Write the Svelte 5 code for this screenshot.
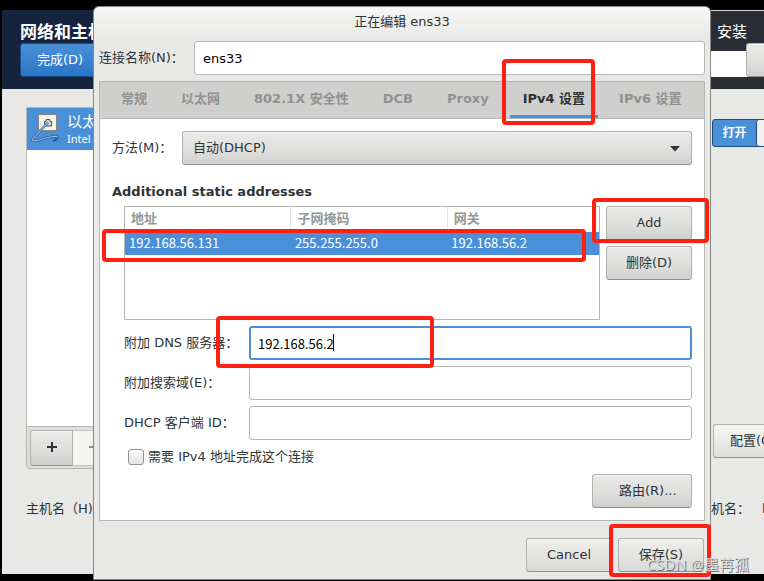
<script>
  let name = $state('ens33');
  let method = $state('auto');
  let dns = $state('192.168.56.2');
  let search = $state('');
  let clientId = $state('');
  let required = $state(false);
  let active = $state(5);

  const tabs = ['常规', '以太网', '802.1X 安全性', 'DCB', 'Proxy', 'IPv4 设置', 'IPv6 设置'];
  const columns = ['地址', '子网掩码', '网关'];
  const rows = [['192.168.56.131', '255.255.255.0', '192.168.56.2']];
</script>

<div class="desktop">
  <div class="installer">
    <header>
      <div class="head-left">
        <h1>网络和主机名</h1>
        <button class="done">完成(D)</button>
      </div>
      <div class="head-right">
        <span class="product">安装</span>
        <div class="lang"><button class="btn" aria-label="帮助"></button></div>
      </div>
    </header>
    <div class="body">
      <div class="devices">
        <div class="device">
          <svg width="28" height="30" viewBox="0 0 28 30" aria-hidden="true">
            <rect x="7.500" y="1.500" width="18" height="16" fill="#f1f1ed" stroke="#85857e" />
            <path d="M13.500 13V8.500h1.500v-2h4v2h1.500V13z" fill="#d4d4cf" stroke="#555753" />
            <path d="M17 9.500 L1.500 26 C-0.500 29 7 27.500 13 25.500 C19 23.500 27 22.500 26.500 24.500 C26 26 24 27.500 22 28" fill="none" stroke="#2b5c9e" stroke-width="2.400" />
            <path d="M17 9.500 L1.500 26 C-0.500 29 7 27.500 13 25.500 C19 23.500 27 22.500 26.500 24.500" fill="none" stroke="#8fb5e4" stroke-width="1.200" />
          </svg>
          <div class="device-text"><strong>以太网 (ens33)</strong><small>Intel Corporation</small></div>
        </div>
        <div class="list"></div>
        <div class="list-tools">
          <button class="btn" aria-label="添加">
            <svg width="10" height="10" viewBox="0 0 10 10"><path d="M5 0v10M0 5h10" stroke="#2e3436" stroke-width="2" /></svg>
          </button>
          <button class="off" aria-label="移除" disabled>
            <svg width="10" height="10" viewBox="0 0 10 10"><path d="M0 5h10" stroke="#8b8e8f" stroke-width="2" /></svg>
          </button>
        </div>
        <p class="host">主机名（H)：</p>
      </div>
      <div class="side">
        <button class="toggle" aria-pressed="true"><span>打开</span><i></i></button>
        <button class="btn configure">配置(O)...</button>
        <p class="current">机名：<span>localhost</span></p>
      </div>
    </div>
  </div>

  <div class="dialog" role="dialog" aria-labelledby="dialog-title">
    <div class="title" id="dialog-title">正在编辑 ens33</div>
    <div class="name-row">
      <label for="conn">连接名称(N)：</label>
      <input id="conn" class="entry" bind:value={name} />
    </div>

    <div class="notebook">
      <div class="tabs" role="tablist">
        {#each tabs as tab, i}
          <button role="tab" class:active={active === i} aria-selected={active === i} onclick={() => (active = i)}>
            {tab}
            {#if i === 5}<span class="mark mark-tab"></span>{/if}
          </button>
        {/each}
      </div>

      <div class="pane">
        <div class="method">
          <label for="method">方法(M)：</label>
          <div class="select">
            <select id="method" class="btn" bind:value={method}>
              <option value="auto">自动(DHCP)</option>
              <option value="manual">手动</option>
            </select>
            <svg width="10" height="6" viewBox="0 0 10 6" aria-hidden="true"><path d="M0 0h10L5 5.500z" fill="#2e3436" /></svg>
          </div>
        </div>

        <h2>Additional static addresses</h2>

        <div class="section">
          <div class="addresses">
            <div class="table-box">
              <table>
                <thead>
                  <tr>{#each columns as c}<th>{c}</th>{/each}</tr>
                </thead>
                <tbody>
                  {#each rows as row}
                    <tr>{#each row as cell}<td>{cell}</td>{/each}</tr>
                  {/each}
                </tbody>
              </table>
              <span class="mark mark-row"></span>
            </div>
            <div class="actions">
              <div class="marked">
                <button class="btn latin">Add</button>
                <span class="mark mark-add"></span>
              </div>
              <button class="btn">删除(D)</button>
            </div>
          </div>

          <div class="fields">
            <label for="dns">附加 DNS 服务器：</label>
            <div class="marked">
              <input id="dns" class="entry focused" bind:value={dns} />
              <span class="caret"></span>
              <span class="mark mark-dns"></span>
            </div>
            <label for="search">附加搜索域(E)：</label>
            <input id="search" class="entry" bind:value={search} />
            <label for="client">DHCP 客户端 ID：</label>
            <input id="client" class="entry" bind:value={clientId} />
          </div>

          <label class="check">
            <input type="checkbox" bind:checked={required} />
            <span>需要 IPv4 地址完成这个连接</span>
          </label>
          <button class="btn routes">路由(R)...</button>
        </div>
      </div>
    </div>

    <div class="footer">
      <button class="btn">Cancel</button>
      <div class="marked">
        <button class="btn">保存(S)</button>
        <span class="mark mark-save"></span>
      </div>
    </div>
  </div>

  <div class="credit">CSDN @墨苒孤</div>
</div>

<style>
  :global(body) {
    margin: 0;
    background: #000;
  }
  .desktop,
  .desktop :global(*) {
    box-sizing: border-box;
  }
  .desktop {
    position: relative;
    min-height: 100vh;
    padding: 10px 0 7px 2px;
    overflow: hidden;
    background: #000;
    color: #2e3436;
    font: 13px/20px 'DejaVu Sans', 'Noto Sans CJK SC', sans-serif;
  }
  button,
  input,
  select {
    font: inherit;
    color: inherit;
    margin: 0;
  }
  h1,
  h2,
  p {
    margin: 0;
  }
  .btn {
    height: 34px;
    padding: 0 16px;
    border: 1px solid #b0b0ac;
    border-bottom-color: #92928d;
    border-radius: 3px;
    background: linear-gradient(#e9e9e8, #dededc 60%, #cfcfcd);
    box-shadow: inset 0 1px #f5f5f4;
    white-space: nowrap;
  }
  .marked {
    position: relative;
    display: grid;
  }
  .mark {
    position: absolute;
    z-index: 2;
    border: 4px solid #ff2011;
    border-radius: 4px;
    pointer-events: none;
  }

  /* installer behind the dialog */
  .installer {
    background: #e8e8e6;
  }
  header {
    display: flex;
    height: 79px;
    color: #fff;
  }
  .head-left {
    flex: 1;
    padding: 11px 0 0 18px;
    background: #15233f;
  }
  h1 {
    font-size: 17px;
    line-height: 22px;
  }
  .done {
    width: 120px;
    height: 34px;
    padding: 0 16px;
    text-align: left;
    border: 1px solid #1c5187;
    border-radius: 3px;
    background: linear-gradient(#4a90d9, #2a76c6);
    color: #fff;
  }
  .head-right {
    flex: 0 0 53px;
    border-top: 1px solid #d8d8d8;
    background: #2a2d35;
    overflow: hidden;
  }
  .product {
    display: block;
    padding: 11px 0 0 6px;
    font-size: 15px;
  }
  .lang {
    display: flex;
    align-items: flex-end;
    justify-content: flex-end;
    height: 35px;
    background: linear-gradient(#2a2d35 9px, #fff 9px);
  }
  .lang .btn {
    width: 18px;
    padding: 0;
    border-right: 0;
    border-radius: 3px 0 0 3px;
  }
  .body {
    display: flex;
    justify-content: space-between;
    height: 485px;
  }
  .devices {
    width: 300px;
    padding: 18px 0 0 24px;
  }
  .device {
    display: flex;
    gap: 8px;
    height: 43px;
    padding: 5px 0 0 4px;
    border: 1px solid #b6b6b3;
    border-bottom: 0;
    background: #4a90d9;
    color: #fff;
  }
  .device-text {
    display: grid;
    align-content: start;
  }
  .device strong {
    font-size: 15px;
    font-weight: 400;
    line-height: 18px;
  }
  .device small {
    font: 11px/16px 'Noto Sans', sans-serif;
  }
  .list {
    height: 276px;
    border-left: 1px solid #b6b6b3;
    background: #fff;
  }
  .list-tools {
    display: flex;
    height: 43px;
    padding: 3px;
    border: 1px solid #b6b6b3;
    border-radius: 0 0 4px 4px;
    background: #dededc;
  }
  .list-tools button {
    width: 43px;
    height: 36px;
    padding: 0;
    border-radius: 3px 0 0 3px;
  }
  .list-tools .off {
    border: 1px solid #c4c4c1;
    border-left: 0;
    border-radius: 0 3px 3px 0;
    background: #f4f4f3;
  }
  .host {
    margin-top: 30px;
  }
  .side {
    flex: 0 0 53px;
    padding-top: 30px;
    overflow: hidden;
  }
  .toggle {
    display: flex;
    width: 90px;
    height: 28px;
    margin-left: 1px;
    padding: 0;
    border: 1px solid #1c4a7c;
    border-radius: 3px;
    background: #4a90d9;
    color: #fff;
    font-size: 12px;
    font-weight: 700;
    line-height: 26px;
  }
  .toggle span {
    width: 43px;
  }
  .toggle i {
    flex: 1;
    height: 26px;
    border-left: 1px solid #1c4a7c;
    border-radius: 3px;
    background: #f2f2f1;
  }
  .configure {
    margin: 277px 0 0 2px;
    background: linear-gradient(#f6f6f5, #dededc);
  }
  .current {
    display: flex;
    gap: 12px;
    margin-top: 41px;
    white-space: nowrap;
  }

  /* connection editor */
  .dialog {
    position: absolute;
    top: 6px;
    left: 93px;
    right: 53px;
    padding: 0 5px 7px;
    border: 1px solid #868683;
    border-radius: 6px 6px 0 0;
    background: linear-gradient(#f6f6f5, #e8e8e6 34px);
  }
  .title {
    padding: 5px 0 9px;
    text-align: center;
  }
  .name-row {
    display: grid;
    grid-template-columns: 95px 1fr;
    align-items: center;
  }
  label {
    white-space: nowrap;
  }
  .entry {
    width: 100%;
    min-width: 0;
    height: 34px;
    padding: 0 8px;
    border: 1px solid #b6b6b3;
    border-radius: 3px;
    outline: 0;
    background: #fff;
    color: #000;
  }
  .focused {
    padding: 0 7px;
    border: 2px solid #4a90d9;
    font-family: 'Noto Sans CJK SC', sans-serif;
  }
  .notebook {
    margin-top: 6px;
    border: 1px solid #b6b6b3;
    background: #fff;
  }
  .tabs {
    display: flex;
    gap: 8px;
    height: 37px;
    padding: 0 8px;
    border-bottom: 1px solid #b6b6b3;
    background: #cfcfcd;
  }
  .tabs button {
    position: relative;
    padding: 0 13px;
    border: 0;
    border-bottom: 3px solid transparent;
    background: none;
    color: #8f9291;
    font-weight: 700;
    white-space: nowrap;
  }
  .tabs .active {
    border-bottom-color: #4a90d9;
    color: #2e3436;
  }
  .mark-tab {
    inset: -23px 3px -10px -8px;
  }
  .pane {
    padding: 12px;
  }
  .method {
    display: grid;
    grid-template-columns: 70px 1fr;
    align-items: center;
  }
  .select {
    position: relative;
    display: grid;
  }
  .select select {
    appearance: none;
    padding: 0 10px;
  }
  .select svg {
    position: absolute;
    right: 12px;
    top: 15px;
    pointer-events: none;
  }
  h2 {
    margin: 17px 0 4px;
    font-size: 13px;
    line-height: 20px;
  }
  .section {
    display: grid;
    padding-left: 12px;
  }
  .addresses {
    display: grid;
    grid-template-columns: 1fr 86px;
    gap: 6px;
  }
  .table-box {
    position: relative;
    height: 114px;
    border: 1px solid #b6b6b3;
  }
  table {
    width: 100%;
    border-collapse: collapse;
    table-layout: fixed;
  }
  th {
    height: 25px;
    padding: 0 0 2px 6px;
    border-left: 1px solid #e4e4e2;
    text-align: left;
    color: #949796;
    line-height: 20px;
  }
  th:first-child {
    border-left: 0;
  }
  th:nth-child(1) {
    width: 35%;
  }
  th:nth-child(2) {
    width: 33%;
  }
  td {
    height: 23px;
    padding: 0 0 2px 4px;
    background: #4a90d9;
    color: #fff;
    font: 13px/20px 'Noto Sans CJK SC', sans-serif;
  }
  .mark-row {
    inset: 22px 13px 57px -23px;
  }
  .actions {
    display: grid;
    align-content: start;
    gap: 6px;
  }
  .latin {
    padding-bottom: 2px;
    font-family: 'Noto Sans', sans-serif;
  }
  .mark-add {
    inset: -8px -17px -3px -14px;
  }
  .fields {
    display: grid;
    grid-template-columns: 125px 1fr;
    gap: 6px 0;
    align-items: center;
    margin-top: 6px;
  }
  .caret {
    position: absolute;
    left: 84px;
    top: 8px;
    width: 1px;
    height: 17px;
    background: #000;
  }
  .mark-dns {
    top: -10px;
    bottom: -8px;
    left: -33px;
    width: 218px;
  }
  .check {
    display: flex;
    align-items: center;
    gap: 4px;
    margin-top: 7px;
    padding-left: 4px;
  }
  .check input {
    appearance: none;
    width: 16px;
    height: 16px;
    border: 1px solid #92928d;
    border-radius: 3px;
    background: linear-gradient(#fafafa, #e4e4e2);
  }
  .routes {
    justify-self: end;
    width: 100px;
    margin-top: 7px;
    padding-left: 26px;
  }
  .footer {
    display: flex;
    justify-content: flex-end;
    gap: 6px;
    margin-top: 17px;
    padding-right: 1px;
  }
  .footer .btn {
    width: 86px;
    background: linear-gradient(#eeeeed, #d9d9d7);
  }
  .mark-save {
    inset: -14px -7px -5px -9px;
  }
  .credit {
    position: absolute;
    z-index: 3;
    right: 15px;
    bottom: 6px;
    font: 15px/22px 'Noto Sans', 'Noto Sans CJK SC', sans-serif;
    color: #dcdcdc;
    text-shadow: 1px 1px #777;
  }
</style>
